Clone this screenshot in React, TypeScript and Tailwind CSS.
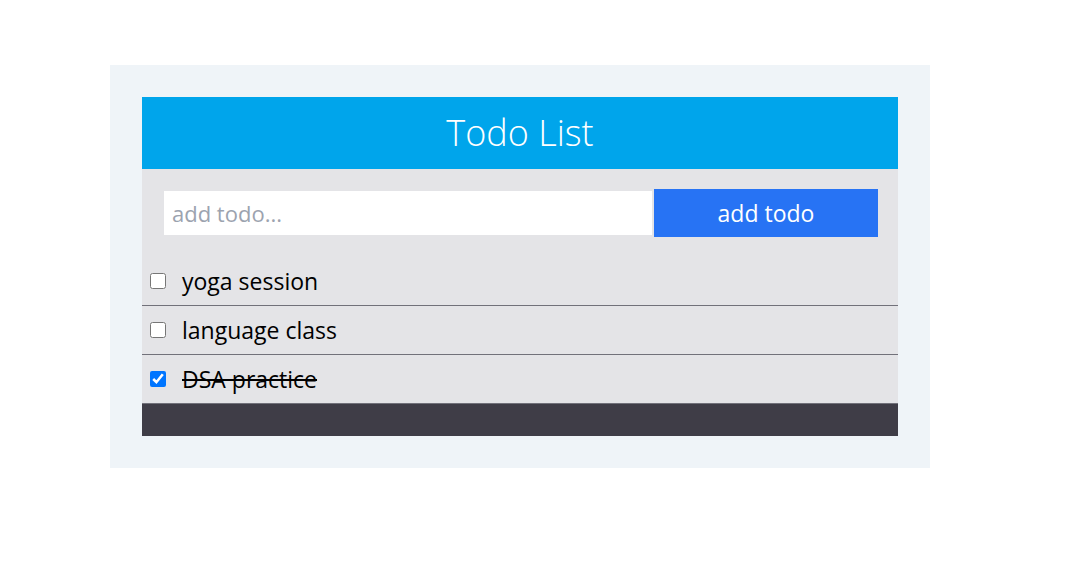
import { useState } from 'react';

type Todo = { id: number; text: string; done: boolean };

const initial: Todo[] = [
  { id: 1, text: 'yoga session', done: false },
  { id: 2, text: 'language class', done: false },
  { id: 3, text: 'DSA practice', done: true },
];

export default function App() {
  const [todos, setTodos] = useState<Todo[]>(initial);
  const [value, setValue] = useState('');

  const addTodo = () => {
    if (!value.trim()) return;
    setTodos([...todos, { id: Date.now(), text: value.trim(), done: false }]);
    setValue('');
  };

  const toggle = (id: number) =>
    setTodos(todos.map(t => (t.id === id ? { ...t, done: !t.done } : t)));

  return (
    <div className="min-h-screen bg-white pt-[65px] pl-[110px] font-['Open_Sans',sans-serif]">
      <div className="w-[820px] bg-[#eff4f8] p-[32px]">
        <div className="bg-[#e4e4e7]">
          <div className="h-[72px] bg-[#00a5eb] flex items-center justify-center">
            <h1 className="text-white text-[36px] font-light leading-none">Todo List</h1>
          </div>

          <div className="flex items-center px-[20px] pt-[20px] pb-[20px]">
            <input
              value={value}
              onChange={e => setValue(e.target.value)}
              placeholder="add todo..."
              className="flex-1 h-[44px] m-[2px] bg-white px-[8px] text-[22px] text-black outline-none placeholder:text-[#9ca3af]"
            />
            <button
              onClick={addTodo}
              className="w-[224px] h-[48px] bg-[#2773f4] text-white text-[23px]"
            >
              add todo
            </button>
          </div>

          <ul>
            {todos.map(t => (
              <li
                key={t.id}
                className="h-[49px] flex items-center border-b border-[#71717a] px-[8px]"
              >
                <input
                  type="checkbox"
                  checked={t.done}
                  onChange={() => toggle(t.id)}
                  className="w-[16px] h-[16px]"
                />
                <span
                  className={`ml-[16px] text-[23px] text-black ${t.done ? 'line-through' : ''}`}
                >
                  {t.text}
                </span>
              </li>
            ))}
          </ul>

          <div className="h-[32px] bg-[#3f3d47]" />
        </div>
      </div>
    </div>
  );
}
